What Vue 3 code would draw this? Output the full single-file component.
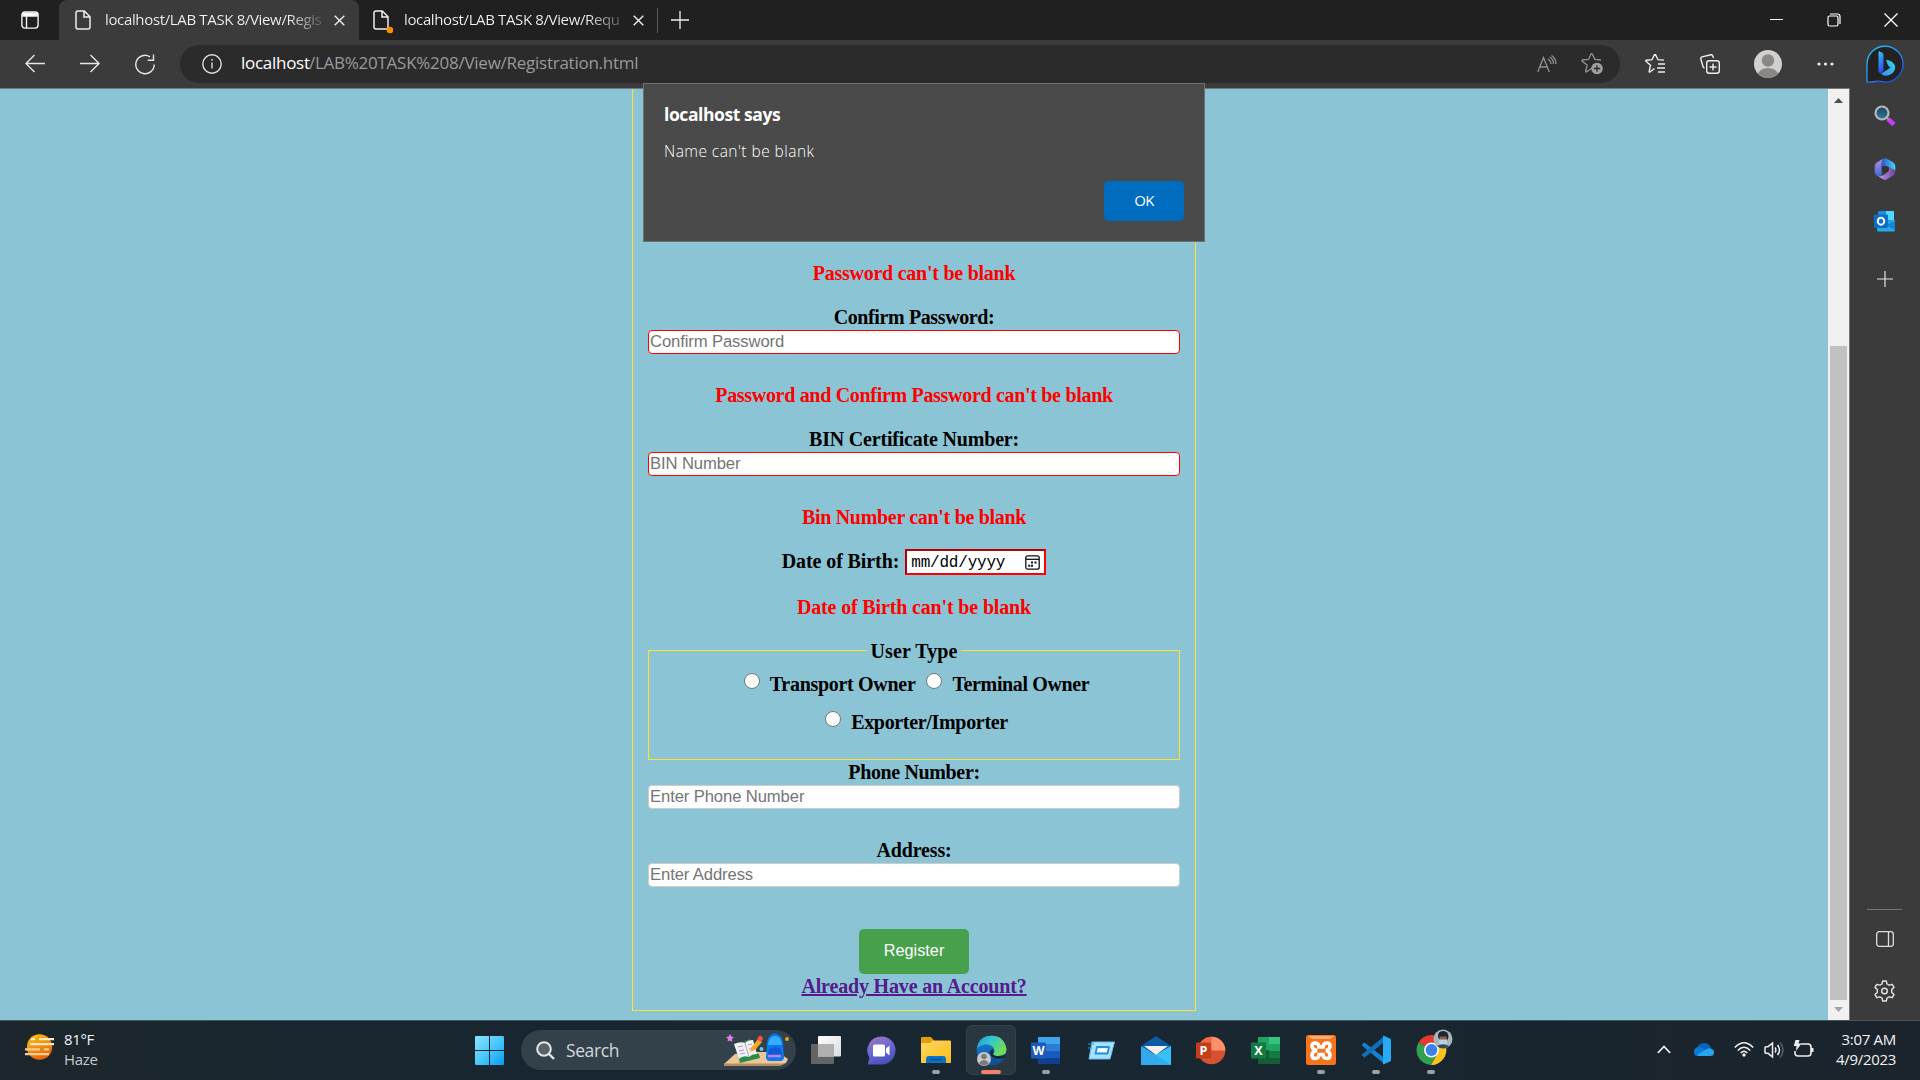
<script setup>
const errors = {
  password: "Password can't be blank",
  confirm: "Password and Confirm Password can't be blank",
  bin: "Bin Number can't be blank",
  dob: "Date of Birth can't be blank",
}
</script>

<template>
  <div class="screen">
    <div class="titlebar">
      <div class="workspace">
        <svg width="18" height="18" viewBox="0 0 18 18" fill="none" stroke="#f4f4f4" stroke-width="1.4"><rect x=".9" y=".9" width="16.2" height="16.2" rx="3" /><path d="M1 3.5h16M5.500 5v12" /><path d="M2 2h14v3H2z" fill="#fff" /></svg>
      </div>
      <div class="tab active">
        <svg class="file" width="16" height="20" viewBox="0 0 16 20" fill="none" stroke="#eee" stroke-width="1.5"><path d="M3 1h6.300L15 6.700V17q0 2-2 2H3q-2 0-2-2V3q0-2 2-2zM9 1v6h6" /></svg>
        <span class="tab-title t1">localhost/LAB TASK 8/View/Regis</span>
        <svg class="tx" width="11" height="11" viewBox="0 0 11 11" stroke="#eee" stroke-width="1.4"><path d="M.7.7l9.600 9.600M10.300.7L.7 10.300" /></svg>
      </div>
      <div class="tab second">
        <svg class="file" width="20" height="25" viewBox="0 0 20 25" fill="none" stroke="#eee" stroke-width="1.500"><path d="M3 1h6.300L15 6.700V17q0 2-2 2H3q-2 0-2-2V3q0-2 2-2zM9 1v6h6" /><circle cx="17" cy="20" r="3.300" fill="#ff8c00" stroke="none" /></svg>
        <span class="tab-title t2">localhost/LAB TASK 8/View/Requ</span>
        <svg class="tx" width="11" height="11" viewBox="0 0 11 11" stroke="#eee" stroke-width="1.4"><path d="M.7.7l9.600 9.600M10.300.7L.7 10.300" /></svg>
      </div>
      <i class="tabsep"></i>
      <svg class="newtab" width="18" height="18" viewBox="0 0 18 18" stroke="#eee" stroke-width="1.3"><path d="M9 0v18M0 9h18" /></svg>
      <div class="winbtns">
        <svg width="13" height="13" viewBox="0 0 13 13" stroke="#fff"><path d="M0 6.500h13" /></svg>
        <svg width="14" height="14" viewBox="0 0 14 14" fill="none" stroke="#fff" stroke-width="1.200"><rect x="1" y="3" width="10" height="10" rx="1.500" /><path d="M3 1h7.500q2.500 0 2.500 2.500V11" /></svg>
        <svg width="14" height="14" viewBox="0 0 14 14" stroke="#fff" stroke-width="1.300"><path d="M.5.5l13 13M13.500.5l-13 13" /></svg>
      </div>
    </div>

    <div class="toolbar">
      <div class="nav">
        <svg width="20" height="20" viewBox="0 0 20 20" fill="none" stroke="#e6e6e6" stroke-width="1.400"><path d="M20 9.500H1M9.500 1L1 9.500l8.500 8.500" /></svg>
        <svg width="20" height="20" viewBox="0 0 20 20" fill="none" stroke="#e6e6e6" stroke-width="1.400"><path d="M0 9.500h19M10.500 1L19 9.500 10.500 18" /></svg>
        <svg width="20" height="21" viewBox="0 0 20 21" fill="none" stroke="#e6e6e6" stroke-width="1.400"><path d="M15 2.800A9.200 9.200 0 1 0 19.200 10.500M18.500.5v5.800h-5.800" /></svg>
      </div>
      <div class="pill">
        <svg class="info" width="20" height="20" viewBox="0 0 20 20" fill="none" stroke="#ddd" stroke-width="1.400"><circle cx="10" cy="10" r="9.200" /><path d="M10 8.500v6M10 5v1.800" /></svg>
        <span class="host">localhost</span><span class="path">/LAB%20TASK%208/View/Registration.html</span>
        <svg class="aloud" width="20" height="18" viewBox="0 0 20 18" fill="none" stroke="#929292" stroke-width="1.300"><path d="M.7 17L6.500 2.500 12.300 17M2.700 12h7.700M11 4q3 2 3 5M12.500 2q4 2 4 7M14.500.5q4.500 3 4.500 8.500" /></svg>
        <svg class="starp" width="22" height="22" viewBox="0 0 22 22"><path d="M11 15l-5.500 3.800q-1 .3-.8-.8l1.400-6L1 8q-.4-.8.500-1l6-.6L10 1q.6-.9 1.200 0L14 6.400l6 .6" fill="none" stroke="#929292" stroke-width="1.300" /><circle cx="16" cy="15.500" r="5.800" fill="#a0a0a0" /><path d="M16 12.300v6.400M12.800 15.500h6.400" stroke="#2b2b2b" stroke-width="1.300" /></svg>
      </div>
      <svg class="fav" width="21" height="20" viewBox="0 0 21 20" fill="none" stroke="#eee" stroke-width="1.400"><path d="M9.500 15L5 18.500q-1 .5-.8-.7l1.300-6L1 7.800q-.6-.8.4-1l5.600-.6L9.500 1q.5-.8 1 0l2.500 5.200 6 .4M13 10.500h7M12 14.500h8M13 18.500h7" transform="translate(0 -.5)" /></svg>
      <svg class="coll" width="20" height="20" viewBox="0 0 20 20" fill="none" stroke="#eee" stroke-width="1.400"><path d="M4.500 14Q3.400 13.800 3 12.500L.8 5Q.5 3.300 2 2.800L10.800.7q1.500-.2 2 1.300l.7 2" /><rect x="6.700" y="6.700" width="12.600" height="12.600" rx="2.500" /><path d="M13 9.500v7M9.500 13h7" /></svg>
      <svg class="ava" width="28" height="28" viewBox="0 0 28 28"><defs><clipPath id="av"><circle cx="14" cy="14" r="14" /></clipPath></defs><g clip-path="url(#av)"><path fill="#d2d0ce" d="M0 0h28v28H0z" /><circle cx="14" cy="10.500" r="6.200" fill="#8a8886" /><ellipse cx="14" cy="26" rx="10.500" ry="8" fill="#8a8886" /></g></svg>
      <svg class="dots" width="17" height="4" viewBox="0 0 17 4" fill="#eee"><circle cx="2" cy="2" r="1.600" /><circle cx="8.500" cy="2" r="1.600" /><circle cx="15" cy="2" r="1.600" /></svg>
      <svg class="bing" width="38" height="38" viewBox="0 0 38 38">
        <defs>
          <linearGradient id="bo" x1="0" y1="0" x2=".8" y2="1"><stop stop-color="#1fc8ee" /><stop offset=".6" stop-color="#2a82f5" /><stop offset="1" stop-color="#1b49d0" /></linearGradient>
          <linearGradient id="bb" x1="0" y1="0" x2=".3" y2="1"><stop stop-color="#3cc4fb" /><stop offset="1" stop-color="#2352e8" /></linearGradient>
          <linearGradient id="bc" x1="1" y1="0" x2="0" y2="1"><stop stop-color="#2bd9e0" /><stop offset="1" stop-color="#3f8cff" /></linearGradient>
        </defs>
        <path d="M1 37V19A18 18 0 1 1 19 37.200Q13 35.500 9 36.500 4 37.500 1 37z" fill="#222" stroke="url(#bo)" stroke-width="1.400" />
        <path d="M12.500 7q0-1 1-.7l3 1.600q1 .6 1 1.800v16l-3 2.800q-2-.8-2-3z" fill="url(#bb)" />
        <path d="M20 14.800q7 1 9 6 1 5-3.500 8-6 3.800-10.500 0l9.500-6-2.500-2.500z" fill="url(#bc)" />
      </svg>
    </div>

    <div class="middle">
      <div class="page">
        <form class="card" @submit.prevent>
          <p class="err e1">{{ errors.password }}</p>
          <label class="l-confirm">Confirm Password:</label>
          <div class="field bad">Confirm Password</div>
          <p class="err e2">{{ errors.confirm }}</p>
          <label class="l-bin">BIN Certificate Number:</label>
          <div class="field bad">BIN Number</div>
          <p class="err e3">{{ errors.bin }}</p>
          <div class="daterow">
            <label>Date of Birth:</label>
            <div class="date">
              <span>mm/dd/yyyy</span>
              <svg width="15" height="15" viewBox="0 0 15 15" fill="none" stroke="#111" stroke-width="1.300"><rect x=".8" y=".8" width="13.400" height="13.400" rx="2" /><path d="M1 4.300h13" /><path d="M6 7.500h2M9.500 7.500h2M3.200 10.700h2M6 10.700h2" stroke-width="2" /></svg>
            </div>
          </div>
          <p class="err e4">{{ errors.dob }}</p>
          <div class="group">
            <span class="legend">User Type</span>
            <div class="radios">
              <i class="radio"></i><span class="r1">Transport Owner</span><i class="radio"></i><span class="r2">Terminal Owner</span>
            </div>
            <div class="radios last">
              <i class="radio"></i><span class="r3">Exporter/Importer</span>
            </div>
          </div>
          <label class="l-phone">Phone Number:</label>
          <div class="field">Enter Phone Number</div>
          <label class="l-addr">Address:</label>
          <div class="field">Enter Address</div>
          <button class="register">Register</button>
          <a class="login">Already Have an Account?</a>
        </form>

        <div class="dialog">
          <h1>localhost says</h1>
          <p>Name can't be blank</p>
          <button>OK</button>
        </div>
      </div>

      <div class="scrollbar">
        <svg width="9" height="5" viewBox="0 0 9 5"><path d="M0 5L4.500 0 9 5z" fill="#505050" /></svg>
        <i class="thumb"></i>
        <svg width="9" height="5" viewBox="0 0 9 5"><path d="M0 0h9L4.500 5z" fill="#a3a3a3" /></svg>
      </div>

      <div class="sidebar">
        <svg class="s1" width="22" height="22" viewBox="0 0 22 22"><defs><linearGradient id="lens" x2="0" y2="1"><stop stop-color="#16465f" /><stop offset="1" stop-color="#2c7ca0" /></linearGradient></defs><path d="M14 14l6 5.500" stroke="#c33cf5" stroke-width="4.500" /><path d="M12 12l3 3" stroke="#999" stroke-width="2" /><circle cx="8" cy="8" r="6.500" fill="url(#lens)" stroke="#b9b7b5" stroke-width="2.200" /></svg>
        <svg class="s2" width="22" height="22" viewBox="0 0 22 22">
          <defs><linearGradient id="ma" x2="0" y2="1"><stop stop-color="#b58be0" /><stop offset="1" stop-color="#3d6ddd" /></linearGradient><linearGradient id="mb"><stop stop-color="#2a58c8" /><stop offset="1" stop-color="#45d3f7" /></linearGradient><linearGradient id="mc"><stop stop-color="#c79af0" /><stop offset="1" stop-color="#6b4596" /></linearGradient></defs>
          <path d="M9 .8L3 4.300Q.7 5.700 .7 8.300v5.500Q.7 16.500 3 17.700q2.500 1.200 4.700-.5L7.500 7q0-4 1.500-6.200z" fill="url(#ma)" />
          <path d="M9 .8q2-1 4 0l6 3.500q2.300 1.300 2.300 4v4.500L14 8.800q-3-1.500-6 .4Q6.800 3 9 .8z" fill="url(#mb)" />
          <path d="M21.300 12v1.800q0 2.600-2.300 3.900L13 21.200q-2 1-4 0L4 18.200q3 .3 5.500-1.200l3.500-2.200q2.500-1.500 2.300-5.200z" fill="url(#mc)" />
          <circle cx="11" cy="11" r="3.300" fill="#333038" />
        </svg>
        <svg class="s3" width="22" height="21" viewBox="0 0 22 21"><rect x="4" y="0" width="16" height="14" rx="1" fill="#1b8fdd" /><path d="M12 0h7q1 0 1 1v8h-8z" fill="#50d9ff" /><path d="M3 11l18-2v10q0 1.500-1.500 1.500h-15Q3 20.500 3 19z" fill="#28a8ea" /><path d="M21 10v9l-9-5z" fill="#1484ce" /><rect x="0" y="3.500" width="14" height="13.500" rx="1.200" fill="#0a6fc9" /><ellipse cx="7" cy="10.200" rx="3.200" ry="3.500" fill="none" stroke="#fff" stroke-width="1.900" /></svg>
        <svg class="s4" width="16" height="16" viewBox="0 0 16 16" stroke="#e5e5e5" stroke-width="1.200"><path d="M8 0v16M0 8h16" /></svg>
        <i class="srule"></i>
        <svg class="s5" width="18" height="16" viewBox="0 0 18 16" fill="none" stroke="#ddd" stroke-width="1.300"><rect x=".7" y=".7" width="16.600" height="14.600" rx="2.500" /><path d="M12.500 1v14" /></svg>
        <svg class="s6" width="21" height="22" viewBox="0 0 21 22" fill="none" stroke="#e5e5e5" stroke-width="1.400" stroke-linejoin="round"><path d="M8.700 1h3.600l.7 3 2.200 1.200 3-.9 1.800 3.100-2.300 2.200v2.800l2.300 2.200-1.800 3.100-3-.9L13 18l-.7 3H8.700L8 18l-2.200-1.200-3 .9L1 14.600l2.300-2.200V9.600L1 7.400l1.800-3.100 3 .9L8 4z" /><circle cx="10.500" cy="11" r="2.800" /></svg>
      </div>
    </div>

    <div class="taskbar">
      <svg class="weather" width="32" height="26" viewBox="0 0 32 26"><defs><linearGradient id="sun" x2=".5" y2="1"><stop stop-color="#fbc60f" /><stop offset="1" stop-color="#e9650a" /></linearGradient></defs><circle cx="15.500" cy="13" r="12.700" fill="url(#sun)" /><g stroke-width="2.300" fill="none"><path d="M7 5.200h4M15 5.200h15M6 10.200h24" stroke="#fbe7c2" /><path d="M1 15.300h15M20 15.300h5M1 20.200h24" stroke="#f2cf9a" /></g></svg>
      <div class="wtext"><span>81°F</span><span class="dim">Haze</span></div>

      <div class="apps">
        <svg class="start" width="29" height="29" viewBox="0 0 29 29"><defs><linearGradient id="win" x2="1" y2="1"><stop stop-color="#8fe2fd" /><stop offset=".5" stop-color="#4ac8fb" /><stop offset="1" stop-color="#0a9bf5" /></linearGradient></defs><path d="M1 0h13v14H0V1q0-1 1-1zM15 0h13q1 0 1 1v13H15zM0 15h14v14H1q-1 0-1-1zM15 15h14v13q0 1-1 1H15z" fill="url(#win)" /></svg>
        <div class="search">
          <svg width="19" height="19" viewBox="0 0 19 19" fill="none" stroke="#e6e6e6" stroke-width="2"><circle cx="8" cy="8" r="6.800" fill="#56636b" /><path d="M13 13l5 5" stroke-width="2.400" /></svg>
          <span>Search</span>
          <svg class="art" width="68" height="34" viewBox="0 0 68 34">
            <path d="M1 31L12 21l9-2h34l10 7-2 4-10 3H1z" fill="#e9c79b" /><path d="M1 30.500h62l-6 2.500H1z" fill="#b98d60" />
            <path d="M12 12l5 18 20-5 -1-4-3-1-6-14z" fill="#2e8b45" /><path d="M11 11q6-3 11-1 3-3 8-3l4 14q-5 0-8 3-6-2-10 2z" fill="#f2f0f7" /><path d="M22 10l4 14M15 14l5-1M16 18l5-1M17 21l5-1M25 12l4-1M26 16l4-1" stroke="#a9a0c0" fill="none" />
            <path d="M28 15l7-9 4 3-7 8-5 2z" fill="#fba62b" /><path d="M34 6l2-3q3-1 4 3l-2 3z" fill="#f0563c" />
            <path d="M7 1l1.300 2.500 2.700.5-2 2 .3 3L7 7.500 4.500 8.500 5 6 3 4l2.800-.5z" fill="#e07df0" />
            <circle cx="38.500" cy="16" r="1.900" fill="#5fd0e0" /><circle cx="64" cy="6" r="1.900" fill="#f3a712" />
            <path d="M49 2q3-3 6 0" stroke="#0b59c0" stroke-width="2" fill="none" /><path d="M44 12Q44 1 52 1t8 11l1 12q0 4-4 4H47q-4 0-4-4z" fill="#0b78ef" /><path d="M45 12Q46 3 52 3t7 9z" fill="#35adff" /><path d="M45 20q1-6 7-6t7 6v3H45z" fill="#0f5ad8" /><path d="M45 23h13" stroke="#c47cf7" stroke-width="2.500" />
          </svg>
        </div>
        <div class="app"><svg width="30" height="28" viewBox="0 0 30 28"><defs><linearGradient id="tv" x2="1" y2="1"><stop stop-color="#fff" /><stop offset="1" stop-color="#dcdcdc" /></linearGradient></defs><rect y="8" width="23" height="20" rx="1" fill="#646464" /><rect x="7" y="0" width="23" height="20.500" rx="1" fill="url(#tv)" /><path d="M7 8h16v12.500H7z" fill="#b0b0b0" /></svg></div>
        <div class="app"><svg width="29" height="29" viewBox="0 0 29 29"><defs><linearGradient id="chat" x2=".4" y2="1"><stop stop-color="#a376b8" /><stop offset=".5" stop-color="#6f6bd2" /><stop offset="1" stop-color="#4b53bc" /></linearGradient></defs><path d="M14.500.5a14 14 0 1 1 0 28H1.500Q.5 28 1 27l1.500-5A14 14 0 0 1 14.500.5z" fill="url(#chat)" /><rect x="6" y="8.500" width="12" height="12" rx="1.500" fill="#fff" /><path d="M19 12.500l3.500-3v10l-3.500-3z" fill="#fff" /></svg></div>
        <div class="app run"><svg width="30" height="27" viewBox="0 0 30 27"><defs><linearGradient id="fo" x2="1" y2="1"><stop stop-color="#ffd862" /><stop offset="1" stop-color="#fbbc1a" /></linearGradient></defs><path d="M0 1q0-1 1-1h9l3 3.500V9H0z" fill="#e39e0b" /><path d="M0 6h9l3-2.500h17q1 0 1 1V26H0z" fill="url(#fo)" /><path d="M5 26v-4q0-3 3-3h14q3 0 3 3v4z" fill="#0c72c6" /><path d="M9 22.500h12" stroke="#0a4e91" stroke-width="1.500" /></svg></div>
        <div class="app run cur"><svg width="31" height="31" viewBox="0 0 31 31">
          <defs><linearGradient id="ea" x2="1" y2=".4"><stop stop-color="#2296d8" /><stop offset=".5" stop-color="#35c7cf" /><stop offset="1" stop-color="#6fdc52" /></linearGradient><linearGradient id="eb" x2="0" y2="1"><stop stop-color="#1a7fd0" /><stop offset="1" stop-color="#0b58b0" /></linearGradient></defs>
          <circle cx="15.500" cy="15.500" r="14.800" fill="url(#eb)" /><path d="M1 13Q3 .7 15.500.7T30.500 14q0 7-8 7-5 0-5.500-2 3-3 0-7-6-6-16 1z" fill="url(#ea)" /><path d="M17 14q-3 .5-3 4 1 6 9 6 4 0 6.500-2l.5-3q-3 2-7.500 2-5 0-5.500-2 1.500-2 0-5z" fill="#182a35" /><path d="M13 16q0 7 7 9 5 1 8-2-5 8-13 7-6-5-2-14z" fill="#124f97" />
          <circle cx="8" cy="24" r="7" fill="#c9c9c9" /><circle cx="8" cy="21.500" r="2.800" fill="#7b7b7b" /><path d="M3 28q5-6 10 0-5 5-10 0z" fill="#7b7b7b" />
        </svg></div>
        <div class="app run"><svg width="30" height="29" viewBox="0 0 30 29"><path d="M7 1h22v7H7z" fill="#41a5ee" /><path d="M7 8h22v7H7z" fill="#2b7cd3" /><path d="M7 15h22v7H7z" fill="#185abd" /><path d="M7 22h22v6H7z" fill="#103f91" /><rect y="6.500" width="15" height="16" rx="1" fill="#1a5cbe" /><text x="7.500" y="19" class="glyph" fill="#fff">W</text></svg></div>
        <div class="app"><svg width="27" height="19" viewBox="0 0 27 19"><path d="M4 1h22.500L22 18H1z" fill="#a7e1fb" stroke="#5ebcf0" /><path d="M0 3h6M0 7h4" stroke="#2d9be0" /><path d="M9 6h12l-1.500 6.500H7.500z" fill="#d9f5ff" stroke="#2490dc" stroke-width="1.800" stroke-linejoin="round" /><path d="M10 9.300h8.500" stroke="#fff" stroke-width="2" /></svg></div>
        <div class="app"><svg width="30" height="29" viewBox="0 0 30 29"><path d="M0 10L15 0l15 10v5H0z" fill="#0c59a4" /><path d="M0 10l15 9 15-9v19H0z" fill="#32aaed" /><path d="M15 19l15-9v19z" fill="#36c2f6" /><path d="M3 10h24l-12 9z" fill="#f3f1ef" /></svg></div>
        <div class="app"><svg width="30" height="29" viewBox="0 0 30 29"><circle cx="15.500" cy="14.500" r="13.800" fill="#d35230" /><path d="M15.500.7v13.800H2A13.800 13.800 0 0 1 15.500.7z" fill="#ed6c47" /><path d="M15.500.7a13.800 13.800 0 0 1 13.800 13.800H15.500z" fill="#ff8f6b" /><rect y="6.500" width="15" height="16" rx="1" fill="#c43e1c" /><text x="7.500" y="19" class="glyph" fill="#fff">P</text></svg></div>
        <div class="app"><svg width="30" height="29" viewBox="0 0 30 29"><path d="M7 1h11v13H7z" fill="#21a366" /><path d="M18 1h11v7H18z" fill="#33c481" /><path d="M18 8h11v7H18z" fill="#21a366" /><path d="M7 14h11v14H7z" fill="#185c37" /><path d="M18 15h11v7H18z" fill="#107c41" /><path d="M18 22h11v6H18z" fill="#185c37" /><rect y="6.500" width="15" height="16" rx="1" fill="#107c41" /><text x="7.500" y="19" class="glyph" fill="#fff">X</text></svg></div>
        <div class="app run"><svg width="30" height="30" viewBox="0 0 30 30"><rect width="30" height="30" rx="2.500" fill="#f8741c" /><path d="M3 1h24q-1 3-4 3H7Q4 4 3 1z" fill="#fbab75" /><path d="M11 15.500Q6 14.500 6 11.200 6 8 9 8q3.800 0 4 4h4q.2-4 4-4 3 0 3 3.200 0 3.300-4 4.300 4 1 4 4.800 0 3.200-3 3.200-3.800 0-4-4h-4q-.2 4-4 4-3 0-3-3.200 0-3.800 5-4.800z" fill="none" stroke="#fff" stroke-width="3.600" /></svg></div>
        <div class="app run"><svg width="30" height="30" viewBox="0 0 30 30"><path d="M1 10l2.500-2L24 24v5z" fill="#1583d0" stroke="#1583d0" stroke-linejoin="round" /><path d="M1 20l2.500 2L24 6V1z" fill="#0f6fbb" stroke="#0f6fbb" stroke-linejoin="round" /><path d="M22 .5l7 3q1 .5 1 1.500v20q0 1-1 1.500l-7 3z" fill="#2aa9f4" /></svg></div>
        <div class="app run chrome"><svg width="38" height="36" viewBox="0 0 38 36">
          <path d="M15.500 21L2.500 13.500A15 15 0 0 1 28.500 13.500L29 16H15.500z" fill="#e33b2e" /><path d="M15.500 21L2.500 13.500a15 15 0 0 0 12.500 22.500l7-12z" fill="#2fa14f" /><path d="M16 16h13.500a15 15 0 0 1-14.500 20l7-12z" fill="#fcc31e" /><circle cx="15.500" cy="21" r="7.500" fill="#fff" /><circle cx="15.500" cy="21" r="5.900" fill="#3c7fee" />
          <circle cx="27" cy="10" r="9.500" fill="#a8b6bc" /><path d="M22 8q-.5-6 5-6t5.500 6l-1.500 4h-7z" fill="#20242b" /><path d="M23.500 7.500h7v3.500h-7z" fill="#8a6553" /><path d="M23 10.500h8v4q-4 4-8 0z" fill="#b3d1df" /><path d="M21 17q6-3.500 12 0-6 5-12 0z" fill="#39465a" />
        </svg></div>
      </div>

      <div class="tray">
        <svg class="up" width="14" height="9" viewBox="0 0 14 9" fill="none" stroke="#eee" stroke-width="1.800"><path d="M.8 8L7 1.500 13.200 8" /></svg>
        <svg class="cloud" width="20" height="13" viewBox="0 0 20 13"><path d="M3 5Q5 0 10.500 0 15 0 17 5l-6 4z" fill="#0663b8" /><path d="M0 9q0-4.500 5-5 3 0 6 2.500L7 13H4Q0 13 0 9z" fill="#0a7bd6" /><path d="M3 12l8-5q3-2.500 6-1.500 3 1 3 4 0 3.500-4 3.500H5z" fill="#27a6ef" /></svg>
        <svg class="wifi" width="20" height="16" viewBox="0 0 20 16" fill="none" stroke="#eee" stroke-width="1.600"><path d="M.8 6.500q9.200-9.500 18.400 0M3.800 9.500q6.200-6.500 12.400 0M6.700 12q3.300-3.500 6.600 0" /><circle cx="10" cy="14" r="1.700" fill="#eee" stroke="none" /></svg>
        <svg class="vol" width="20" height="18" viewBox="0 0 20 18" fill="none" stroke="#eee" stroke-width="1.500"><path d="M1 6.500q0-.8.800-.8H4L8.500 2v14L4 12.300H1.800q-.8 0-.8-.8zM11 6.500q1.800 2.500 0 5M13.500 4q4 5 0 10" /><path d="M16 1.500q6 7.500 0 15" stroke="#56616a" /></svg>
        <svg class="bat" width="21" height="18" viewBox="0 0 21 18" fill="none" stroke="#eee" stroke-width="1.600"><path d="M8 4h7q3 0 3 3v6q0 3-3 3H5q-3 0-3-3v-2" /><path d="M18 8h2.500v4H18z" fill="#eee" stroke="none" /><path d="M2.500 0h4L5.500 3.500h3L3 11l.5-5H.8z" fill="#eee" stroke="none" /></svg>
        <div class="clock"><span class="time">3:07 AM</span><span class="day">4/9/2023</span></div>
      </div>
    </div>
  </div>
</template>

<style>
body { background: #202020; overflow: hidden; }
</style>

<style scoped>
* { box-sizing: border-box; }
svg, i { display: block; flex: none; }
p, h1 { margin: 0; }
button { border: 0; padding: 0; }
.screen { width: 1920px; height: 1080px; display: flex; flex-direction: column; overflow: hidden; font-family: "Open Sans", "Noto Sans", sans-serif; white-space: nowrap; }

.titlebar { height: 40px; flex: none; background: #202020; display: flex; align-items: center; }
.workspace { width: 59px; height: 40px; padding: 11px 0 0 21px; }
.tab { display: flex; align-items: flex-start; height: 40px; color: #f2f2f2; font-size: 15px; line-height: 20px; }
.tab .file { margin-top: 10px; }
.tab .tx { margin-top: 15px; }
.active { width: 300px; background: #3b3b3b; border-radius: 8px 8px 0 0; padding-left: 16px; }
.second { width: 297px; padding-left: 14px; }
.tab-title { margin-top: 9px; overflow: hidden; background: linear-gradient(90deg, #f2f2f2 84%, #555 100%); -webkit-background-clip: text; background-clip: text; color: transparent; }
.t1 { width: 218px; margin-left: 14px; margin-right: 11px; letter-spacing: -0.35px; }
.t2 { width: 217px; margin-left: 11px; margin-right: 12px; letter-spacing: -0.37px; }
.tabsep { width: 1px; height: 25px; background: #5a5a5a; margin-left: 1px; }
.newtab { margin-left: 13px; margin-top: -1px; }
.winbtns { margin-left: auto; margin-right: 22px; margin-top: -1px; display: flex; align-items: center; gap: 43.5px; }

.toolbar { height: 48px; flex: none; background: #3b3b3b; display: flex; align-items: center; }
.nav { width: 180px; padding-left: 25px; display: flex; gap: 35px; }
.pill { width: 1440px; height: 38px; border-radius: 19px; background: #2b2b2b; display: flex; align-items: center; font-size: 17px; line-height: 24px; }
.info { margin-left: 22px; margin-right: 19px; }
.host { color: #fff; width: 68px; letter-spacing: -.28px; margin-top: -2px; }
.path { color: #9a9a9a; width: 330px; letter-spacing: -.26px; margin-top: -2px; }
.aloud { margin-left: auto; }
.starp { margin-left: 24px; margin-right: 17px; }
.fav { margin-left: 25px; }
.coll { margin-left: 34px; }
.ava { margin-left: 34px; }
.dots { margin-left: 35px; }
.bing { margin-left: 32px; }

.middle { height: 932px; flex: none; display: flex; background: #3b3b3b; }
.page { position: relative; width: 1828px; border-top: 1px solid #777; background: #8bc5d5; display: flex; justify-content: center; }
.card { width: 564px; height: 922px; border: 1px solid #ffe135; border-top: 0; padding: 173px 15px 0; display: flex; flex-direction: column; align-items: center; font: bold 20px/22px "Liberation Serif", serif; color: #000; }
.card label, .card p { height: 22px; flex: none; }
.err { color: #f00; }
.e1 { letter-spacing: -.25px; }
.l-confirm { margin-top: 22px; letter-spacing: -.38px; }
.field { width: 532px; height: 24px; flex: none; margin-top: 2px; border: 1px solid #ccc; border-radius: 4px; background: #fff; padding-left: 1px; font: 16.667px/21px "Liberation Sans", sans-serif; letter-spacing: -.12px; color: #757575; }
.bad { border-color: #f00; }
.e2, .e3 { margin-top: 30px; letter-spacing: -.31px; }
.l-bin { margin-top: 22px; letter-spacing: -.19px; }
.daterow { display: flex; align-items: flex-start; height: 26px; margin-top: 21px; gap: 6px; }
.daterow label { margin-top: 1px; letter-spacing: -.1px; }
.date { width: 141px; height: 26px; border: 2px solid #f00; border-top-color: #b40000; border-left-color: #b40000; background: #fff; display: flex; align-items: center; padding-left: 4px; font: 16px/22px "Liberation Mono", monospace; }
.date span { width: 114px; letter-spacing: -.2px; margin-top: 1px; }
.e4 { margin-top: 21px; letter-spacing: -.15px; }
.group { width: 532px; height: 110px; flex: none; margin-top: 32px; border: 1px solid #ffe135; display: flex; flex-direction: column; align-items: center; }
.legend { height: 22px; margin-top: -11px; padding: 0 3px; background: #8bc5d5; letter-spacing: .1px; }
.radios { display: flex; height: 22px; margin-top: 11px; padding-left: 5px; }
.radio { width: 16px; height: 16px; border: 1px solid #767676; border-radius: 50%; background: #fff; margin: 0 10px 0 0; }
.r1 { margin-right: 11px; letter-spacing: -.3px; }
.r2 { letter-spacing: -.38px; }
.r3 { letter-spacing: -.32px; }
.last { margin-top: 16px; }
.l-phone { margin-top: 1px; letter-spacing: -.36px; }
.l-addr { margin-top: 30px; letter-spacing: -.15px; }
.register { width: 110px; height: 45px; flex: none; margin-top: 42px; padding-bottom: 2px; background: #47a04b; border-radius: 5px; color: #fff; font: 16.300px "Liberation Sans", sans-serif; }
.login { color: #551a8b; text-decoration: underline; margin-top: 1px; letter-spacing: -.16px; }

.dialog { position: absolute; left: 643px; top: -6px; width: 562px; height: 159px; background: #4a4a4a; border: 1px solid #707070; color: #fff; display: flex; flex-direction: column; padding: 18px 20px 0; }
.dialog h1 { font-size: 17.500px; line-height: 24px; font-weight: 700; letter-spacing: -.42px; }
.dialog p { margin-top: 14px; font-size: 15.500px; line-height: 22px; font-weight: 300; letter-spacing: .45px; }
.dialog button { align-self: flex-end; width: 80px; height: 40px; margin-top: 19px; padding-bottom: 2px; background: #006cbe; border-radius: 5px; color: #fff; font: 500 15px "Open Sans", sans-serif; letter-spacing: -.8px; }

.scrollbar { width: 22px; background: #f1f1f1; border-right: 1px solid #777; border-top: 1px solid #777; display: flex; flex-direction: column; align-items: center; padding-top: 9px; }
.thumb { width: 17px; height: 654px; margin: 243px 0 7px; background: #c1c1c1; }
.sidebar { width: 70px; display: flex; flex-direction: column; align-items: center; background: #3b3b3b; padding: 17px 1px 0 0; }
.s2 { margin-top: 31px; }
.s3 { margin-top: 31px; }
.s4 { margin-top: 39px; }
.srule { width: 35px; height: 1px; background: #777; margin-top: 622px; }
.s5 { margin-top: 21px; }
.s6 { margin-top: 33px; }

.taskbar { height: 60px; flex: none; background: linear-gradient(90deg, #1c262c 0, #172631 30%, #182731 60%, #1b242c 100%); border-top: 1px solid #46555d; display: flex; align-items: flex-start; color: #f2f2f2; font-size: 15px; line-height: 20px; }
.weather { margin: 13px 0 0 24px; }
.wtext { display: flex; flex-direction: column; margin: 8px 0 0 8px; width: 60px; letter-spacing: -.35px; }
.dim { color: #c6c9cb; }
.apps { display: flex; margin-left: 351px; align-items: flex-start; }
.start { margin-top: 15px; }
.search { width: 275px; height: 40px; margin: 9px 5px 0 17px; border-radius: 20px; background: #33414a; display: flex; align-items: center; font-size: 17.500px; color: #d4d8da; }
.search svg:first-child { margin-left: 15px; }
.search span { margin-left: 11px; width: 157px; letter-spacing: -.4px; }
.app { position: relative; width: 50px; height: 50px; margin-top: 4px; margin-right: 5px; border-radius: 6px; display: flex; align-items: center; justify-content: center; }
.run::after { content: ""; position: absolute; left: 21px; bottom: 1px; width: 8px; height: 4px; border-radius: 2px; background: #9aa1a6; }
.cur { background: #283740; border: 1px solid #33424a; }
.cur::after { left: 14px; bottom: 0; width: 20px; background: #f3816b; }
.chrome svg { margin: -6px 0 0 8px; }
.glyph { font: bold 12.500px "Open Sans", sans-serif; text-anchor: middle; }
.tray { margin-left: auto; margin-right: 24px; display: flex; align-items: flex-start; }
.up { margin-top: 24px; margin-right: 23px; }
.cloud { margin-top: 22px; margin-right: 20px; }
.wifi { margin-top: 20px; margin-right: 10px; }
.vol { margin-top: 20px; margin-right: 9px; }
.bat { margin-top: 19px; }
.clock { display: flex; flex-direction: column; align-items: flex-end; width: 82px; margin-top: 8px; letter-spacing: -.3px; }
</style>
